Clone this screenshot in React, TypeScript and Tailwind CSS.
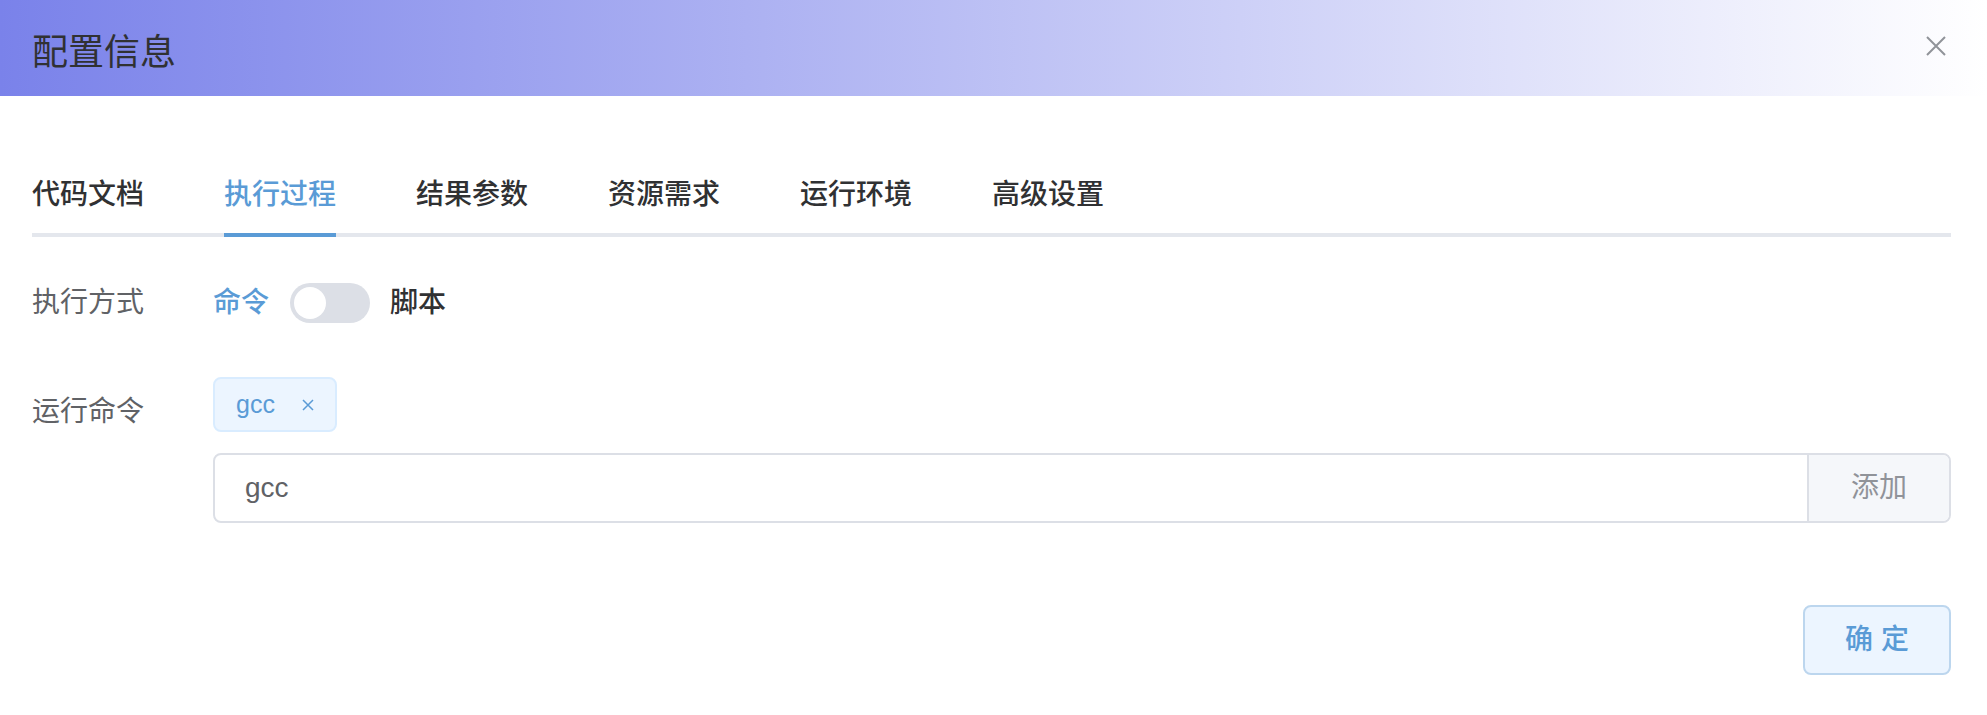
import React from "react";

const tabs = ["代码文档", "执行过程", "结果参数", "资源需求", "运行环境", "高级设置"];

export default function App() {
  return (
    <div className="w-[1987px] h-[715px] bg-white font-['Liberation_Sans','Noto_Sans_CJK_SC',sans-serif] overflow-hidden">
      {/* Header */}
      <div className="h-[96px] flex items-start justify-between pl-[32px] pr-[41px] bg-[linear-gradient(to_right,#7a82ea,#ffffff)]">
        <div className="pt-[35px] text-[36px] leading-[36px] text-[#303133]">配置信息</div>
        <div className="pt-[36px]">
          <svg width="20" height="20" viewBox="0 0 20 20">
            <path d="M1 1 L19 19 M19 1 L1 19" stroke="#909399" strokeWidth="2" fill="none" />
          </svg>
        </div>
      </div>

      <div className="pl-[32px] pr-[36px]">
        {/* Tabs */}
        <div className="mt-[61px] flex border-b-4 border-[#e4e7ed]">
          {tabs.map((t, i) => (
            <div key={t} className={`h-[80px] -mb-[4px] ${i === 0 ? "pr-[40px]" : "px-[40px]"}`}>
              <span
                className={`block h-full text-[28px] leading-[76px] font-medium border-b-4 ${
                  i === 1 ? "text-[#5a9bd6] border-[#5a9bd6]" : "text-[#303133] border-transparent"
                }`}
              >
                {t}
              </span>
            </div>
          ))}
        </div>

        {/* Row 1 */}
        <div className="mt-[46px] flex items-center h-[40px]">
          <div className="w-[181px] text-[28px] leading-[40px] text-[#606266]">执行方式</div>
          <div className="flex items-center">
            <span className="text-[28px] leading-[40px] text-[#5a9bd6] font-medium">命令</span>
            <div className="ml-[21px] mr-[20px] w-[80px] h-[40px] rounded-full bg-[#dcdfe6] flex items-center px-[4px]">
              <div className="w-[32px] h-[32px] rounded-full bg-white" />
            </div>
            <span className="text-[28px] leading-[40px] text-[#303133] font-medium">脚本</span>
          </div>
        </div>

        {/* Row 2 */}
        <div className="mt-[54px] flex">
          <div className="w-[181px] shrink-0 text-[28px] leading-[70px] text-[#606266]">运行命令</div>
          <div className="flex-1 flex flex-col items-start">
            <div className="h-[55px] pl-[21px] pr-[21px] flex items-center rounded-[8px] bg-[#ecf5ff] border-2 border-[#d9ecff]">
              <span className="text-[25px] text-[#5a9bd6] leading-none">gcc</span>
              <svg className="ml-[27px]" width="12" height="12" viewBox="0 0 12 12">
                <path d="M1 1 L11 11 M11 1 L1 11" stroke="#5a9bd6" strokeWidth="1.5" fill="none" />
              </svg>
            </div>
            <div className="mt-[21px] w-full h-[70px] flex rounded-[8px] border-2 border-[#dcdfe6] overflow-hidden">
              <div className="flex-1 flex items-center pl-[30px] text-[28px] text-[#606266]">gcc</div>
              <div className="w-[142px] border-l-2 border-[#dcdfe6] bg-[#f5f7fa] flex items-center justify-center text-[28px] text-[#909399]">
                添加
              </div>
            </div>
          </div>
        </div>

        {/* Footer */}
        <div className="mt-[82px] flex justify-end">
          <button className="w-[148px] h-[70px] rounded-[8px] bg-[#ecf5ff] border-2 border-[#bcd6ee] text-[28px] font-medium text-[#5a9bd6] flex items-center justify-center">
            确 定
          </button>
        </div>
      </div>
    </div>
  );
}
